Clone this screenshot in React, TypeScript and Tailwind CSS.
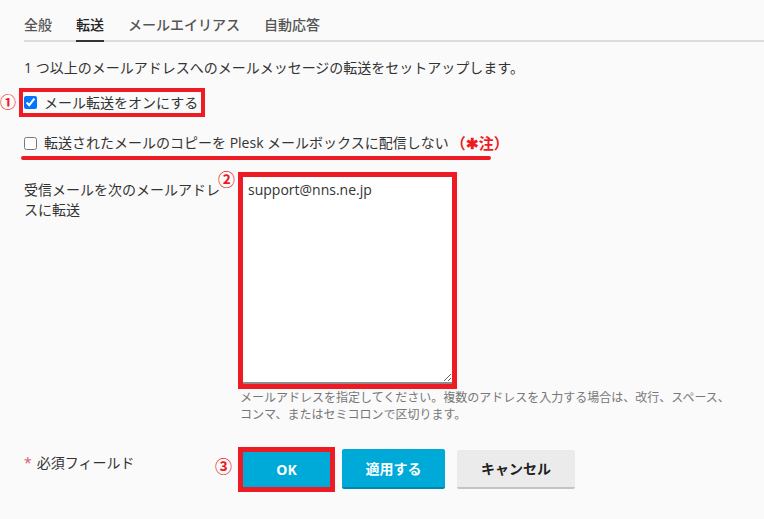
import { useState } from "react";

const tabs = ["全般", "転送", "メールエイリアス", "自動応答"];

export default function App() {
  const [active] = useState(1);
  const [forward, setForward] = useState(true);
  const [noCopy, setNoCopy] = useState(false);

  return (
    <div className="relative min-h-[519px] w-full bg-[#fafafa] font-['Open_Sans','Noto_Sans_CJK_JP',sans-serif] text-[14px] text-[#333]">
      {/* Tabs */}
      <div className="ml-6 flex gap-6 border-b-2 border-[#dcdcdc]">
        {tabs.map((t, i) => (
          <div
            key={t}
            className={`-mb-[2px] border-b-2 pb-[5px] pt-[15px] font-medium leading-5 ${
              i === active ? "border-[#333] text-[#222]" : "border-transparent text-[#555]"
            }`}
          >
            {t}
          </div>
        ))}
      </div>

      <div className="pl-6">
        <p className="mt-4 text-[14px] leading-5">
          1 つ以上のメールアドレスへのメールメッセージの転送をセットアップします。
        </p>

        {/* ① checkbox */}
        <div className="relative mt-[10px]">
          <span className="absolute -left-6 top-[6px] text-[16px] font-bold leading-4 text-[#ed1c24]">①</span>
          <label className="-ml-[5px] inline-flex h-[29px] items-center border-4 border-[#ed1c24] pl-[1px] pr-[3px]">
            <input
              type="checkbox"
              checked={forward}
              onChange={(e) => setForward(e.target.checked)}
              className="m-0 h-[13px] w-[13px]"
            />
            <span className="ml-[7px] leading-5">メール転送をオンにする</span>
          </label>
        </div>

        {/* second checkbox */}
        <label className="mt-4 flex items-center">
          <input
            type="checkbox"
            checked={noCopy}
            onChange={(e) => setNoCopy(e.target.checked)}
            className="m-0 h-[13px] w-[13px]"
          />
          <span className="ml-[7px] leading-5">
            転送されたメールのコピーを Plesk メールボックスに配信しない
          </span>
          <span className="ml-[2px] text-[15px] font-bold leading-5 text-[#ed1c24]">（✱注）</span>
        </label>
        <div className="-ml-[3px] mt-[3px] h-1 w-[470px] rounded-full bg-[#ed1c24]" />

        {/* forward address */}
        <div className="mt-3 flex">
          <div className="relative w-[214px] pr-4 pt-2 leading-5">
            受信メールを次のメールアドレスに転送
            <span className="absolute right-[3px] top-0 text-[17px] font-bold leading-4 text-[#ed1c24]">②</span>
          </div>
          <div>
            <div className="h-[217px] w-[219px] border-[5px] border-[#ed1c24] bg-white">
              <textarea
                defaultValue="support@nns.ne.jp"
                className="block h-full w-full resize border-b-2 border-[#8c8c8c] bg-white px-[5px] pt-[3px] text-[14px] leading-5 text-[#333] outline-none"
              />
            </div>
            <p className="w-[500px] pl-[2px] text-[12px] leading-[17px] text-[#777]">
              メールアドレスを指定してください。複数のアドレスを入力する場合は、改行、スペース、
              <br />
              コンマ、またはセミコロンで区切ります。
            </p>
          </div>
        </div>

        {/* buttons */}
        <div className="mt-6 flex">
          <div className="relative w-[214px] pt-[6px] leading-5">
            <span className="mr-[5px] text-[#e0526b]">*</span>
            必須フィールド
            <span className="absolute right-[6px] top-[12px] text-[17px] font-bold leading-4 text-[#ed1c24]">③</span>
          </div>
          <div className="flex items-start">
            <div className="border-[5px] border-[#ed1c24]">
              <button className="block h-[35px] w-[87px] bg-[#00aad8] text-[14px] font-bold text-white">
                OK
              </button>
            </div>
            <button className="ml-[7px] mt-[2px] h-[40px] w-[103px] rounded-[2px] border-b-2 border-[#0088ae] bg-[#00aad8] text-[14px] font-bold text-white">
              適用する
            </button>
            <button className="ml-3 mt-[3px] h-[39px] w-[118px] rounded-[2px] border-b-2 border-[#c4c4c4] bg-[#ebebeb] text-[14px] font-bold text-[#222]">
              キャンセル
            </button>
          </div>
        </div>
      </div>
    </div>
  );
}
